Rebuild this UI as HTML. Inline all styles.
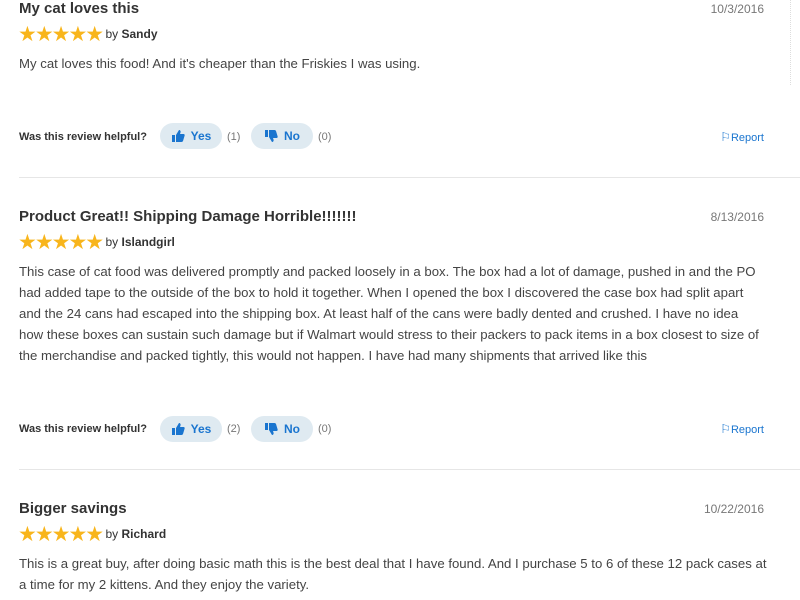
<!DOCTYPE html>
<html><head><meta charset="utf-8"><style>
body{margin:0;width:800px;height:600px;overflow:hidden;background:#fff;font-family:"Liberation Sans",sans-serif;position:relative;color:#444}
.a{position:absolute;white-space:nowrap}
.t{font-size:15px;font-weight:bold;color:#333;left:19px}
.d{font-size:12px;color:#777;right:36px}
.s{left:18px;font-size:12px;color:#333}
.s .st{color:#f8b51c;font-size:21px;letter-spacing:-2px;vertical-align:-3px}
.s b{font-weight:bold}
.b{left:19px;font-size:13.2px;line-height:21px;color:#444}
.h{left:19px;font-size:11px;font-weight:bold;color:#333}
.p{height:26px;width:62px;border-radius:13px;background:#dfeaf1;color:#1a75cf;font-size:12px;font-weight:bold;display:flex;align-items:center;justify-content:center;gap:6px}
.c{font-size:11px;color:#777}
.r{font-size:11px;color:#1a75cf;right:36px}
.hr{position:absolute;left:19px;right:0;height:1px;background:#e6e6e6}
</style></head><body>
<div style="position:absolute;left:790px;top:0;height:85px;border-left:1px dotted #ddd"></div>

<div class="a t" style="top:0">My cat loves this</div>
<div class="a d" style="top:2px">10/3/2016</div>
<div class="a s" style="top:22px"><span class="st">★★★★★</span> by <b>Sandy</b></div>
<div class="a b" style="top:53px">My cat loves this food! And it's cheaper than the Friskies I was using.</div>
<div class="a h" style="top:131px">Was this review helpful?</div>
<div class="a p" style="left:160px;top:123px"><svg width="14" height="14" viewBox="0 0 14 14"><path d="M1 6h3v7H1zM5 6l3-5c1 0 2 1 1.5 2.5L9 5h3.5c1 0 1.5 1 1 2l-1.5 5c-.3.6-.8 1-1.5 1H5z" fill="#1a75cf"/></svg>Yes</div>
<div class="a c" style="left:227px;top:131px">(1)</div>
<div class="a p" style="left:251px;top:123px"><svg width="14" height="14" viewBox="0 0 14 14"><path d="M1 1h3v7H1zM5 8l3 5c1 0 2-1 1.5-2.5L9 9h3.5c1 0 1.5-1 1-2L12 2c-.3-.6-.8-1-1.5-1H5z" fill="#1a75cf"/></svg>No</div>
<div class="a c" style="left:318px;top:131px">(0)</div>
<div class="a r" style="top:130px"><span style="font-size:12px">⚐</span>Report</div>
<div class="hr" style="top:177px"></div>

<div class="a t" style="top:208px">Product Great!! Shipping Damage Horrible!!!!!!!</div>
<div class="a d" style="top:210px">8/13/2016</div>
<div class="a s" style="top:230px"><span class="st">★★★★★</span> by <b>Islandgirl</b></div>
<div class="a b" style="top:261px">This case of cat food was delivered promptly and packed loosely in a box. The box had a lot of damage, pushed in and the PO<br>had added tape to the outside of the box to hold it together. When I opened the box I discovered the case box had split apart<br>and the 24 cans had escaped into the shipping box. At least half of the cans were badly dented and crushed. I have no idea<br>how these boxes can sustain such damage but if Walmart would stress to their packers to pack items in a box closest to size of<br>the merchandise and packed tightly, this would not happen. I have had many shipments that arrived like this</div>
<div class="a h" style="top:423px">Was this review helpful?</div>
<div class="a p" style="left:160px;top:416px"><svg width="14" height="14" viewBox="0 0 14 14"><path d="M1 6h3v7H1zM5 6l3-5c1 0 2 1 1.5 2.5L9 5h3.5c1 0 1.5 1 1 2l-1.5 5c-.3.6-.8 1-1.5 1H5z" fill="#1a75cf"/></svg>Yes</div>
<div class="a c" style="left:227px;top:423px">(2)</div>
<div class="a p" style="left:251px;top:416px"><svg width="14" height="14" viewBox="0 0 14 14"><path d="M1 1h3v7H1zM5 8l3 5c1 0 2-1 1.5-2.5L9 9h3.5c1 0 1.5-1 1-2L12 2c-.3-.6-.8-1-1.5-1H5z" fill="#1a75cf"/></svg>No</div>
<div class="a c" style="left:318px;top:423px">(0)</div>
<div class="a r" style="top:422px"><span style="font-size:12px">⚐</span>Report</div>
<div class="hr" style="top:469px"></div>

<div class="a t" style="top:500px">Bigger savings</div>
<div class="a d" style="top:502px">10/22/2016</div>
<div class="a s" style="top:522px"><span class="st">★★★★★</span> by <b>Richard</b></div>
<div class="a b" style="top:553px">This is a great buy, after doing basic math this is the best deal that I have found. And I purchase 5 to 6 of these 12 pack cases at<br>a time for my 2 kittens. And they enjoy the variety.</div>
</body></html>
